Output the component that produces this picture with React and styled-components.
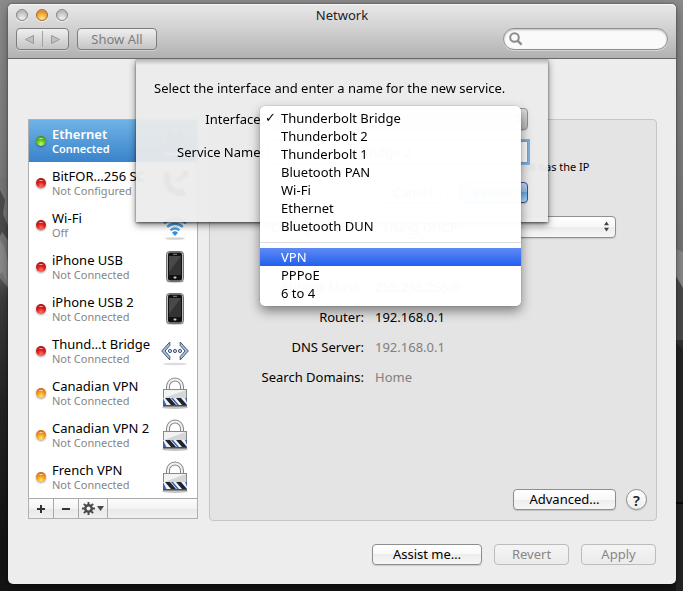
import React from 'react';
import styled, { createGlobalStyle, css } from 'styled-components';

const font = '"Noto Sans", "Open Sans", sans-serif';

const GlobalStyle = createGlobalStyle`
  * {
    box-sizing: border-box;
  }

  body {
    margin: 0;
    background: #161616;
    font: 13px/18px ${font};
    color: #000;
  }

  button, input, select {
    margin: 0;
    font: 13px/18px ${font};
    color: inherit;
  }
`;

const Desktop = styled.div`
  position: relative;
  display: flex;
  min-height: 100vh;
  padding: 4px 7px 7px 8px;
  background: linear-gradient(#8c8c8c, #8a8a8a 4px, #747474 250px, #3c3c3c 300px, #242424 400px, #141414 540px, #141414);
`;

const Wallpaper = styled.svg`
  position: absolute;
  inset: 0;
  width: 100%;
  height: 100%;
`;

const Window = styled.main`
  position: relative;
  display: flex;
  flex-direction: column;
  flex: 1;
  min-width: 0;
  border-radius: 5px;
  background: #ededed;
  box-shadow: 0 0 2px rgba(0, 0, 0, 0.6), 0 4px 12px rgba(0, 0, 0, 0.35);
`;

const TitleBar = styled.header`
  padding: 0 8px 8px;
  border-bottom: 1px solid #686868;
  border-radius: 5px 5px 0 0;
  background: linear-gradient(#e8e8e8, #cfcfcf 50%, #b1b1b1);
  box-shadow: inset 0 1px #f6f6f6;
`;

const TitleRow = styled.div`
  display: grid;
  grid-template-columns: 1fr auto 1fr;
  align-items: center;
  height: 22px;
  margin-bottom: 2px;
`;

const Title = styled.h1`
  margin: 0;
  font-size: 13px;
  font-weight: 400;
  color: #222;
`;

const Lights = styled.div`
  display: flex;
  gap: 8px;
`;

const Light = styled.button`
  width: 12px;
  height: 12px;
  padding: 0;
  border: 1px solid ${({ $on }) => ($on ? '#a9681c' : '#868686')};
  border-radius: 50%;
  background: ${({ $on }) => ($on
    ? 'radial-gradient(circle at 50% 85%, #ffeaa0, #f6b040 45%, #dd8a2c 75%, #f5cf9d)'
    : 'radial-gradient(circle at 50% 85%, #f2f2f2, #d0d0d0 45%, #b5b5b5 75%, #e4e4e4)')};
  box-shadow: 0 1px rgba(255, 255, 255, 0.6);
`;

const ToolRow = styled.div`
  display: flex;
  align-items: center;
  gap: 8px;
`;

const toolButton = css`
  height: 22px;
  border: 1px solid #7e7e7e;
  border-radius: 4px;
  background: linear-gradient(#efefef, #c4c4c4);
  box-shadow: 0 1px rgba(255, 255, 255, 0.35);
`;

const Segments = styled.div`
  ${toolButton}
  display: flex;
  align-items: center;
  width: 53px;
`;

const Segment = styled.button`
  flex: 1;
  height: 16px;
  padding: 0;
  border: 0;
  background: none;
  line-height: 0;

  & + & {
    border-left: 1px solid #a2a2a2;
  }
`;

const ShowAll = styled.button`
  ${toolButton}
  width: 80px;
  padding: 0;
  color: #7d7d7d;
`;

const Search = styled.label`
  display: flex;
  align-items: center;
  gap: 4px;
  width: 165px;
  height: 22px;
  margin-left: auto;
  padding: 0 10px 0 5px;
  border: 1px solid #8f8f8f;
  border-radius: 11px;
  background: #fafafa;
  box-shadow: inset 0 1px 2px rgba(0, 0, 0, 0.25), 0 1px rgba(255, 255, 255, 0.4);

  input {
    flex: 1;
    min-width: 0;
    padding: 0;
    border: 0;
    outline: 0;
    background: none;
  }
`;

const Content = styled.div`
  position: relative;
  display: flex;
  flex: 1;
  flex-direction: column;
  padding: 60px 19px 19px 20px;
`;

const Columns = styled.div`
  display: flex;
  flex: 1;
  gap: 11px;
`;

const Sidebar = styled.aside`
  width: 170px;
  align-self: flex-start;
  border: 1px solid #b0b0b0;
  background: #fff;
`;

const ServiceList = styled.ul`
  margin: 0;
  padding: 0;
  list-style: none;
`;

const Service = styled.button`
  display: flex;
  align-items: center;
  gap: 6px;
  width: 100%;
  height: 42px;
  padding: 0 8px 0 7px;
  border: 0;
  text-align: left;
  background: ${({ $active }) => ($active ? 'linear-gradient(#6fb3e6, #3a83cb)' : 'none')};
  color: ${({ $active }) => ($active ? '#fff' : '#000')};
  font-weight: ${({ $active }) => ($active ? 600 : 400)};

  svg {
    flex: none;
  }
`;

const dots = {
  green: ['#3c7d0d', '#c8f77a', '#58c211'],
  red: ['#8e1414', '#ff7466', '#dc1a1a'],
  amber: ['#b3550f', '#ffe860', '#f5981a'],
};

const Dot = styled.span`
  flex: none;
  width: 10px;
  height: 10px;
  border-radius: 50%;
  background:
    radial-gradient(ellipse 3px 1px at 50% 25%, rgba(255, 255, 255, 0.75), transparent),
    radial-gradient(
      circle at 50% 80%,
      ${({ $tone }) => dots[$tone][1]},
      ${({ $tone }) => dots[$tone][2]} 45%,
      ${({ $tone }) => dots[$tone][0]}
    );
  box-shadow: 0 1px 2px rgba(0, 0, 0, 0.4);
`;

const ServiceText = styled.span`
  flex: 1;
  min-width: 0;
  white-space: nowrap;
  line-height: 16px;
`;

const ServiceStatus = styled.span`
  display: block;
  font-size: 11px;
  line-height: 14px;
  color: ${({ $active }) => ($active ? '#fff' : '#868686')};
`;

const ListBar = styled.div`
  display: flex;
  height: 20px;
  border-top: 1px solid #a9a9a9;
  background: linear-gradient(#fcfcfc, #f3f3f3 50%, #e8e8e8 50%, #f0f0f0);
`;

const ListButton = styled.button`
  display: flex;
  align-items: center;
  justify-content: center;
  gap: 2px;
  width: ${({ $wide }) => ($wide ? 29 : 25)}px;
  padding: 0;
  border: 0;
  border-right: 1px solid #a9a9a9;
  background: none;
`;

const Panel = styled.section`
  display: flex;
  flex: 1;
  flex-direction: column;
  min-width: 0;
  padding: 0 9px 10px 0;
  border: 1px solid #c6c6c6;
  border-radius: 4px;
  background: #e4e4e4;
`;

const Fields = styled.dl`
  display: grid;
  grid-template-columns: 154px 1fr;
  grid-auto-rows: 30px;
  column-gap: 11px;
  align-items: center;
  margin: 0 31px 0 0;

  dt {
    text-align: right;
  }

  dd {
    margin: 0;
    color: ${({ $dim }) => ($dim ? '#808080' : '#000')};
  }
`;

const StatusNote = styled.p`
  height: 62px;
  margin: 0 0 0 165px;
  padding-top: 9px;
  font-size: 11px;
  line-height: 16px;
`;

const PopUp = styled.div`
  position: relative;
  display: flex;

  select {
    width: 100%;
    height: 22px;
    padding: 0 20px 0 8px;
    border: 1px solid #909090;
    border-radius: 4px;
    appearance: none;
    background: ${({ $pressed }) => ($pressed
    ? 'linear-gradient(#dedede, #b9b9b9)'
    : 'linear-gradient(#fff, #f7f7f7 50%, #ececec 50%, #f6f6f6)')};
    box-shadow: 0 1px 1px rgba(0, 0, 0, 0.12);
  }

  & > svg {
    position: absolute;
    top: 5px;
    right: 6px;
    pointer-events: none;
  }
`;

const Actions = styled.div`
  display: flex;
  justify-content: flex-end;
  align-items: center;
  gap: ${({ $gap }) => $gap || 12}px;
  margin-top: ${({ $top }) => $top || 'auto'};
`;

const Footer = styled(Actions)`
  padding-right: 1px;
`;

const Button = styled.button`
  min-width: ${({ $width }) => $width}px;
  height: 21px;
  padding: 0 8px;
  border: 1px solid #8e8e8e;
  border-radius: 4px;
  background: linear-gradient(#fff, #f8f8f8 50%, #ededed 50%, #f6f6f6);
  box-shadow: 0 1px 1px rgba(0, 0, 0, 0.15);
  line-height: 17px;

  &:disabled {
    border-color: #bcbcbc;
    background: linear-gradient(#f4f4f4, #ebebeb);
    box-shadow: none;
    color: #868686;
  }

  ${({ $primary }) => $primary && css`
    border-color: #3f4f96;
    background: linear-gradient(#c8dff5, #8dbdee 50%, #68a9ea 50%, #b4e2fb);
  `}
`;

const Help = styled.button`
  width: 21px;
  height: 21px;
  padding: 0;
  border: 1px solid #8e8e8e;
  border-radius: 50%;
  background: linear-gradient(#fff, #ededed);
  box-shadow: 0 1px 1px rgba(0, 0, 0, 0.15);
  font-size: 15px;
  font-weight: 600;
  color: #222;
`;

const SheetClip = styled.div`
  position: absolute;
  top: 0;
  left: 0;
  right: 0;
  display: flex;
  justify-content: center;
`;

const Sheet = styled.form`
  width: 412px;
  padding: 20px 20px 19px 18px;
  background: linear-gradient(rgba(120, 120, 120, 0.5), rgba(200, 200, 200, 0) 6px), rgba(236, 236, 236, 0.93);
  backdrop-filter: blur(1px);
  box-shadow: 0 3px 7px rgba(0, 0, 0, 0.5), 0 1px 2px rgba(0, 0, 0, 0.5);
  clip-path: inset(0 -20px -120px -20px);
`;

const Prompt = styled.p`
  margin: 0 0 11px;
`;

const SheetRow = styled.div`
  display: grid;
  grid-template-columns: 110px 1fr;
  column-gap: 4px;
  align-items: center;
  height: 22px;
  margin-bottom: 11px;

  label {
    text-align: right;
    white-space: nowrap;
  }
`;

const NameInput = styled.input`
  min-width: 0;
  height: 22px;
  padding: 0 12px;
  border: 1px solid #6fa3d4;
  outline: 0;
  background: #fff;
  box-shadow: 0 0 0 2px #7fb0de;
`;

const Menu = styled.ul`
  position: absolute;
  z-index: 1;
  top: -2px;
  left: -8px;
  right: 7px;
  margin: 0;
  padding: 3px 0 4px;
  border-radius: 5px;
  list-style: none;
  background: rgba(255, 255, 255, 0.98);
  box-shadow: 0 0 1px rgba(0, 0, 0, 0.5), 0 5px 12px rgba(0, 0, 0, 0.45);
`;

const MenuItem = styled.button`
  display: flex;
  width: 100%;
  height: 18px;
  padding: 0 0 0 5px;
  border: 0;
  text-align: left;
  background: ${({ $active }) => ($active ? 'linear-gradient(#5e8af4, #2360ef)' : 'none')};
  color: ${({ $active }) => ($active ? '#fff' : '#000')};
`;

const Check = styled.span`
  width: 16px;
  font-family: "DejaVu Sans", sans-serif;
  font-size: 13px;
`;

const Separator = styled.li`
  height: 13px;
  padding-top: 7px;

  &::before {
    content: '';
    display: block;
    border-top: 1px solid #dcdcdc;
  }
`;

const Arrows = () => (
  <svg width="7" height="11" viewBox="0 0 7 11" aria-hidden="true">
    <path d="M3.500 0.500L6 4.300H1zM3.500 10.500L6 6.700H1z" fill="#444" />
  </svg>
);

const icons = {
  bridge: (
    <>
      <ellipse cx="14" cy="30" rx="12" ry="1.300" fill="#ddd" />
      <path
        d="M8.800 8L0.700 17L8.800 26V22.500L4 17L8.800 11.500zM19.200 8L27.300 17L19.200 26V22.500L24 17L19.200 11.500z"
        fill="#a9bfd9"
        stroke="#46587a"
        strokeWidth="1"
      />
      <g fill="#c4d4e8" stroke="#46587a">
        <circle cx="9" cy="17" r="1.600" />
        <circle cx="14" cy="17" r="1.600" />
        <circle cx="19" cy="17" r="1.600" />
      </g>
    </>
  ),
  modem: (
    <g fill="#8d9299">
      <path d="M4 6C0 12 3 21 9 26C15 31 22 32 26 28L21 22L17 24C13 22 10 19 9 15L11 11L7 5z" />
      <path d="M14 14L22 7L20 5H27V12L25 10L17 17z" />
    </g>
  ),
  wifi: (
    <>
      <ellipse cx="14" cy="30.500" rx="10" ry="1.300" fill="#d4d4d4" />
      <g fill="none" stroke="#4aa2e6" strokeWidth="2.400">
        <path d="M3 15.500A15.500 15.500 0 0 1 25 15.500" />
        <path d="M6.300 19A10.800 10.800 0 0 1 21.700 19" />
        <path d="M9.600 22.400A6.200 6.200 0 0 1 18.400 22.400" />
      </g>
      <path d="M14 28L11 24.700A4.300 4.300 0 0 1 17 24.700z" fill="#2f8fe0" />
    </>
  ),
  phone: (
    <>
      <ellipse cx="14" cy="31.500" rx="9" ry="1.500" fill="#ccc" />
      <rect x="5.500" y="1.500" width="17" height="30" rx="3" fill="#b9bec4" stroke="#6d7278" />
      <rect x="7" y="2.500" width="14" height="28" rx="2" fill="#111" />
      <rect x="8" y="6" width="12" height="19" fill="#333" />
      <path d="M8 6H20L8 22z" fill="#494949" />
      <path d="M12 4.300H16" stroke="#888" />
      <rect x="12.500" y="26.500" width="3" height="2" rx="1" fill="#ccc" />
    </>
  ),
  lock: (
    <>
      <ellipse cx="14" cy="31.500" rx="13" ry="1.500" fill="#c4c4c4" />
      <path d="M7 14V10.500A7 7 0 0 1 21 10.500V14" fill="none" stroke="#858585" strokeWidth="4" />
      <path d="M7 14V10.500A7 7 0 0 1 21 10.500V14" fill="none" stroke="#f2f2f2" strokeWidth="2" />
      <rect x="2.500" y="13.500" width="23" height="17" fill="#d6d6d6" stroke="#8a8a8a" />
      <path d="M3 14H25L3 22z" fill="#f3f3f3" />
      <rect x="2" y="22" width="24" height="7" fill="#f1f3f8" />
      <path d="M2 22V29H5.500zM24 22H26V27zM10 22H12L18 29H16z" fill="#3c62b5" />
      <path d="M4 22H9L15 29H10zM15 22H20L26 29H21z" fill="#20242c" />
      <path d="M2 29.500H26" stroke="#3b4d80" />
    </>
  ),
};

const ServiceIcon = ({ kind }) => (
  <svg width="28" height="34" viewBox="0 0 28 34" aria-hidden="true">{icons[kind]}</svg>
);

const Gear = () => (
  <svg width="13" height="13" viewBox="0 0 13 13" aria-hidden="true">
    <circle cx="6.500" cy="6.500" r="3.200" fill="none" stroke="#4a4a4a" strokeWidth="2.400" />
    <path
      d="M6.500 0V3M6.500 10V13M0 6.500H3M10 6.500H13M1.900 1.900L4 4M9 9L11.100 11.100M11.100 1.900L9 4M4 9L1.900 11.100"
      stroke="#4a4a4a"
      strokeWidth="1.900"
    />
  </svg>
);

const services = [
  { name: 'Ethernet', status: 'Connected', tone: 'green', icon: 'bridge', active: true },
  { name: 'BitFOR…256 SC', status: 'Not Configured', tone: 'red', icon: 'modem' },
  { name: 'Wi-Fi', status: 'Off', tone: 'red', icon: 'wifi' },
  { name: 'iPhone USB', status: 'Not Connected', tone: 'red', icon: 'phone' },
  { name: 'iPhone USB 2', status: 'Not Connected', tone: 'red', icon: 'phone' },
  { name: 'Thund…t Bridge', status: 'Not Connected', tone: 'red', icon: 'bridge' },
  { name: 'Canadian VPN', status: 'Not Connected', tone: 'amber', icon: 'lock' },
  { name: 'Canadian VPN 2', status: 'Not Connected', tone: 'amber', icon: 'lock' },
  { name: 'French VPN', status: 'Not Connected', tone: 'amber', icon: 'lock' },
];

const hardware = [
  'Thunderbolt Bridge',
  'Thunderbolt 2',
  'Thunderbolt 1',
  'Bluetooth PAN',
  'Wi-Fi',
  'Ethernet',
  'Bluetooth DUN',
];
const virtual = ['VPN', 'PPPoE', '6 to 4'];

const InterfaceMenu = ({ chosen, active }) => {
  const item = name => (
    <li key={name} role="none">
      <MenuItem type="button" role="menuitemradio" aria-checked={name === chosen} $active={name === active}>
        <Check>{name === chosen ? '✓' : ''}</Check>
        {name}
      </MenuItem>
    </li>
  );

  return (
    <Menu role="menu" aria-label="Interface">
      {hardware.map(item)}
      <Separator role="separator" />
      {virtual.map(item)}
    </Menu>
  );
};

const NewServiceSheet = () => (
  <SheetClip>
    <Sheet onSubmit={e => e.preventDefault()}>
      <Prompt>Select the interface and enter a name for the new service.</Prompt>
      <SheetRow>
        <label htmlFor="interface">Interface:</label>
        <PopUp $pressed>
          <select id="interface" defaultValue="Thunderbolt Bridge">
            {[...hardware, ...virtual].map(name => <option key={name}>{name}</option>)}
          </select>
          <Arrows />
          <InterfaceMenu chosen="Thunderbolt Bridge" active="VPN" />
        </PopUp>
      </SheetRow>
      <SheetRow>
        <label htmlFor="service-name">Service Name:</label>
        <NameInput id="service-name" defaultValue="Thunderbolt Bridge 2" />
      </SheetRow>
      <Actions $top="19px">
        <Button type="button" $width={70}>Cancel</Button>
        <Button $width={68} $primary>Create</Button>
      </Actions>
    </Sheet>
  </SheetClip>
);

export default function App() {
  return (
    <>
      <GlobalStyle />
      <Desktop>
        <Wallpaper viewBox="0 0 683 591" preserveAspectRatio="none" aria-hidden="true">
          <path d="M0 177L8 180V288L0 278z" fill="#777" />
          <path d="M0 190L5 200L3 214L8 226V240L2 232L0 236z" fill="#4c4c4c" />
          <path d="M0 240L4 246L8 262V286L2 272L0 274z" fill="#8a8a8a" />
          <path d="M676 249L683 252V288L676 276z" fill="#8b8b8b" />
          <path d="M676 278L683 290V340H676z" fill="#4a4a4a" />
          <path d="M676 342L683 350V591H676z" fill="#232323" />
          <path d="M676 503H683" stroke="#0a0a0a" strokeWidth="2" />
        </Wallpaper>
        <Window>
          <TitleBar>
            <TitleRow>
              <Lights>
                <Light aria-label="Close" />
                <Light aria-label="Minimize" $on />
                <Light aria-label="Zoom" />
              </Lights>
              <Title>Network</Title>
            </TitleRow>
            <ToolRow>
              <Segments>
                <Segment aria-label="Back" disabled>
                  <svg width="9" height="9" viewBox="0 0 9 9"><path d="M8.500 0.500V8.500L0.500 4.500z" fill="#c0c0c0" stroke="#999" /></svg>
                </Segment>
                <Segment aria-label="Forward" disabled>
                  <svg width="9" height="9" viewBox="0 0 9 9"><path d="M0.500 0.500V8.500L8.500 4.500z" fill="#c0c0c0" stroke="#999" /></svg>
                </Segment>
              </Segments>
              <ShowAll disabled>Show All</ShowAll>
              <Search>
                <svg width="14" height="14" viewBox="0 0 14 14" aria-hidden="true">
                  <circle cx="5.500" cy="5.500" r="4.300" fill="none" stroke="#8c8c8c" strokeWidth="2" />
                  <path d="M8.800 8.800L12.600 12.600" stroke="#8c8c8c" strokeWidth="2.400" />
                </svg>
                <input type="search" aria-label="Search" />
              </Search>
            </ToolRow>
          </TitleBar>

          <Content>
            <Columns>
              <Sidebar>
                <ServiceList>
                  {services.map(({ name, status, tone, icon, active }) => (
                    <li key={name}>
                      <Service $active={active}>
                        <Dot $tone={tone} />
                        <ServiceText>
                          {name}
                          <ServiceStatus $active={active}>{status}</ServiceStatus>
                        </ServiceText>
                        <ServiceIcon kind={icon} />
                      </Service>
                    </li>
                  ))}
                </ServiceList>
                <ListBar>
                  <ListButton aria-label="Add service">
                    <svg width="8" height="8" viewBox="0 0 8 8"><path d="M4 0V8M0 4H8" stroke="#333" strokeWidth="2" /></svg>
                  </ListButton>
                  <ListButton aria-label="Remove service">
                    <svg width="8" height="8" viewBox="0 0 8 8"><path d="M0 4H8" stroke="#333" strokeWidth="2" /></svg>
                  </ListButton>
                  <ListButton aria-label="Service actions" $wide>
                    <Gear />
                    <svg width="7" height="8" viewBox="0 0 7 8"><path d="M0 1H7L3.500 6z" fill="#4a4a4a" /></svg>
                  </ListButton>
                </ListBar>
              </Sidebar>

              <Panel>
                <Fields>
                  <dt>Status:</dt>
                  <dd>Connected</dd>
                </Fields>
                <StatusNote>
                  Ethernet is currently active and has the IP
                  <br />
                  address 192.168.0.129.
                </StatusNote>
                <Fields>
                  <dt><label htmlFor="ipv4">Configure IPv4:</label></dt>
                  <dd>
                    <PopUp>
                      <select id="ipv4" defaultValue="Using DHCP">
                        <option>Using DHCP</option>
                        <option>Manually</option>
                      </select>
                      <Arrows />
                    </PopUp>
                  </dd>
                </Fields>
                <Fields>
                  <dt>IP Address:</dt>
                  <dd>192.168.0.129</dd>
                  <dt>Subnet Mask:</dt>
                  <dd>255.255.255.0</dd>
                  <dt>Router:</dt>
                  <dd>192.168.0.1</dd>
                </Fields>
                <Fields $dim>
                  <dt>DNS Server:</dt>
                  <dd>192.168.0.1</dd>
                  <dt>Search Domains:</dt>
                  <dd>Home</dd>
                </Fields>
                <Actions $gap={10}>
                  <Button $width={103}>Advanced…</Button>
                  <Help aria-label="Help">?</Help>
                </Actions>
              </Panel>
            </Columns>

            <Footer $top="23px">
              <Button $width={110}>Assist me…</Button>
              <Button $width={75} disabled>Revert</Button>
              <Button $width={75} disabled>Apply</Button>
            </Footer>
            <NewServiceSheet />
          </Content>
        </Window>
      </Desktop>
    </>
  );
}
